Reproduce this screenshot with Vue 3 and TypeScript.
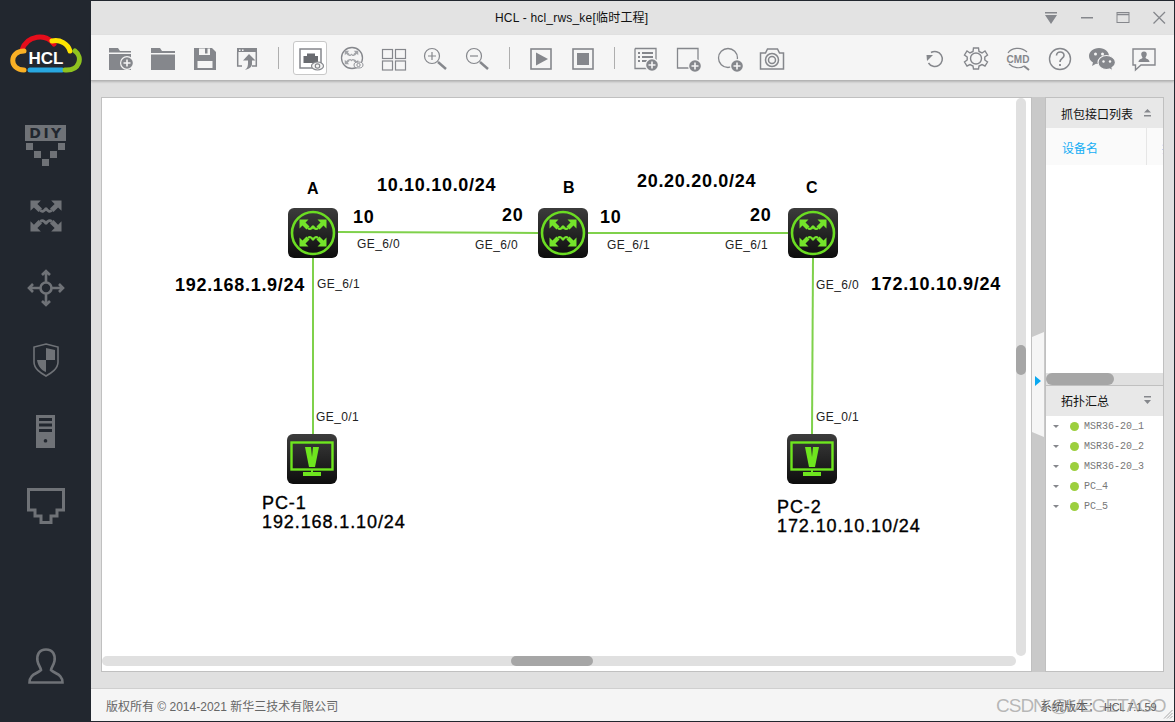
<script setup lang="ts">
interface Label { text: string; x: number; y: number; kind: 'net' | 'port' | 'name' | 'host' }
interface Node { kind: 'router' | 'pc'; x: number; y: number }

// canvas content sits at page (102, 98), numbers below are page coords
const ox = 102
const oy = 98

const nodes: Node[] = [
  { kind: 'router', x: 288, y: 208 },
  { kind: 'router', x: 538, y: 208 },
  { kind: 'router', x: 788, y: 208 },
  { kind: 'pc', x: 287, y: 434 },
  { kind: 'pc', x: 787, y: 434 }
]

const labels: Label[] = [
  { text: 'A', x: 307, y: 189, kind: 'name' },
  { text: 'B', x: 563, y: 188, kind: 'name' },
  { text: 'C', x: 806, y: 188, kind: 'name' },
  { text: '10', x: 353, y: 217, kind: 'net' },
  { text: '20', x: 502, y: 215, kind: 'net' },
  { text: '10', x: 600, y: 217, kind: 'net' },
  { text: '20', x: 750, y: 215, kind: 'net' },
  { text: '10.10.10.0/24', x: 377, y: 185, kind: 'net' },
  { text: '20.20.20.0/24', x: 637, y: 181, kind: 'net' },
  { text: '192.168.1.9/24', x: 175, y: 285, kind: 'net' },
  { text: '172.10.10.9/24', x: 871, y: 284, kind: 'net' },
  { text: 'GE_6/0', x: 357, y: 244, kind: 'port' },
  { text: 'GE_6/0', x: 475, y: 245, kind: 'port' },
  { text: 'GE_6/1', x: 607, y: 245, kind: 'port' },
  { text: 'GE_6/1', x: 725, y: 245, kind: 'port' },
  { text: 'GE_6/1', x: 317, y: 284, kind: 'port' },
  { text: 'GE_6/0', x: 816, y: 285, kind: 'port' },
  { text: 'GE_0/1', x: 316, y: 417, kind: 'port' },
  { text: 'GE_0/1', x: 816, y: 417, kind: 'port' },
  { text: 'PC-1', x: 262, y: 503, kind: 'host' },
  { text: '192.168.1.10/24', x: 262, y: 522, kind: 'host' },
  { text: 'PC-2', x: 777, y: 507, kind: 'host' },
  { text: '172.10.10.10/24', x: 777, y: 526, kind: 'host' }
]

const devices = ['MSR36-20_1', 'MSR36-20_2', 'MSR36-20_3', 'PC_4', 'PC_5']

function labelPos(l: Label) {
  return { left: l.x - ox + 'px', top: l.y - oy - 10 + 'px' }
}
function nodePos(n: Node) {
  return { left: n.x - ox + 'px', top: n.y - oy + 'px' }
}
</script>

<template>
  <div class="window">
    <!-- shared drawings -->
    <svg class="defs" width="0" height="0">
      <defs>
        <linearGradient id="tile" x1="0" y1="0" x2="0" y2="1">
          <stop offset="0" stop-color="#3c3c3c" />
          <stop offset="1" stop-color="#0d0d0d" />
        </linearGradient>
        <g id="arrows">
          <g id="quad">
            <path d="M-13.500 -13.500H-4.500L-7.500 -10.500L-3.500 -6.500L-6.500 -3.500L-10.500 -7.500L-13.500 -4.500Z" />
            <path d="M-5 -5Q-2.500 -2.500 0.300 -7" fill="none" stroke="currentColor" stroke-width="2.400" />
          </g>
          <use href="#quad" transform="scale(-1 1)" />
          <use href="#quad" transform="scale(1 -1)" />
          <use href="#quad" transform="scale(-1 -1)" />
        </g>
        <g id="eye">
          <ellipse cx="0" cy="0" rx="6" ry="4" fill="#f5f5f5" stroke="#85878c" stroke-width="1.200" />
          <circle r="2.200" fill="none" stroke="#85878c" stroke-width="1.200" />
        </g>
        <g id="plus">
          <circle r="7" fill="#f5f5f5" />
          <circle r="5.800" fill="#85878c" />
          <path d="M-3.500 0h7M0 -3.500v7" stroke="#f5f5f5" stroke-width="1.600" />
        </g>
      </defs>
    </svg>

    <aside class="sidebar">
      <svg class="logo" width="72" height="42" viewBox="0 0 72 42">
        <g fill="none" stroke-width="5" stroke-linecap="round">
          <path d="M12 17C17 2 36 0 44 11" stroke="#e60d1b" />
          <path d="M42 8C50 6 58 11 60 18" stroke="#fde400" />
          <path d="M14 18C-1 18 -1 37 14 37" stroke="#f9b025" />
          <path d="M20 37H52" stroke="#28a7e1" />
          <path d="M55 37C70 38 73 24 65 18" stroke="#8fc31f" />
        </g>
        <text x="36" y="31" text-anchor="middle" class="logo-text">HCL</text>
      </svg>

      <svg class="side-icon diy" width="42" height="42" viewBox="0 0 42 42" fill="#6f7277">
        <rect x="0" y="0" width="41" height="16" />
        <text x="21.500" y="13" text-anchor="middle" class="diy-text">DIY</text>
        <path d="M1 18h7v7H1zM33 18h7v7h-7zM9 26h7v7H9zM25 26h7v7h-7zM17 34h7v7h-7z" />
      </svg>
      <svg class="side-icon sw" width="34" height="34" viewBox="-17 -17 34 34" fill="#6f7277" color="#6f7277">
        <use href="#arrows" transform="scale(1.150)" />
      </svg>
      <svg class="side-icon hub" width="38" height="38" viewBox="-19 -19 38 38" fill="none" stroke="#6f7277" stroke-width="2.600">
        <circle r="5.500" />
        <path d="M0 -6V-17M-4 -13L0 -17L4 -13M0 6V17M-4 13L0 17L4 13M-6 0H-17M-13 -4L-17 0L-13 4M6 0H17M13 -4L17 0L13 4" />
      </svg>
      <svg class="side-icon shield" width="26" height="34" viewBox="0 0 26 34">
        <path d="M13 1L25 4V19C25 26 18 30 13 33C8 30 1 26 1 19V4Z" fill="none" stroke="#6f7277" stroke-width="1.600" />
        <path d="M13 5L22 7V17H13ZM13 17V29C8 27 5 23 4 17Z" fill="#6f7277" />
      </svg>
      <svg class="side-icon server" width="19" height="33" viewBox="0 0 19 33">
        <path fill-rule="evenodd" d="M0 0H19V33H0ZM3 3V6H16V3ZM3 8.500V11.500H16V8.500ZM3 14V17H16V14ZM9.500 24A1.800 1.800 0 1 0 9.510 24Z" fill="#6f7277" />
      </svg>
      <svg class="side-icon lan" width="38" height="37" viewBox="0 0 38 37">
        <path d="M1.500 1.500H36.500V22H30V28H24V34.500H14V28H8V22H1.500Z" fill="none" stroke="#6f7277" stroke-width="3" />
      </svg>
      <svg class="side-icon user" width="36" height="36" viewBox="0 0 36 36">
        <path d="M18 1.500C11 1.500 8.500 7 9.500 13C10.200 17 12.500 19 13 22C9 26 1.500 26 1.500 34.500H34.500C34.500 26 27 26 23 22C23.500 19 25.800 17 26.500 13C27.500 7 25 1.500 18 1.500Z" fill="none" stroke="#6f7277" stroke-width="2.600" />
      </svg>
    </aside>

    <div class="main">
      <header class="titlebar">
        <span class="title">HCL - hcl_rws_ke[临时工程]</span>
        <div class="win-btns">
          <svg width="14" height="14" viewBox="0 0 14 14" fill="#85878c"><path d="M1 1H13V2.500H1ZM1 4H13L7 13Z" /></svg>
          <svg width="14" height="14" viewBox="0 0 14 14" fill="#85878c"><rect x="1" y="6" width="12" height="1.500" /></svg>
          <svg width="14" height="14" viewBox="0 0 14 14" fill="none" stroke="#85878c"><rect x="1" y="1.500" width="12" height="10" /><path d="M1 3.500H13" stroke-width="1.500" /></svg>
          <svg width="14" height="14" viewBox="0 0 14 14" fill="none" stroke="#85878c" stroke-width="1.300"><path d="M1.500 1L13 12.500M13 1L1.500 12.500" /></svg>
        </div>
      </header>

      <nav class="toolbar">
        <div class="tool">
          <svg viewBox="0 0 32 32" fill="#85878c"><path d="M4 6H13L15 9H26V10.500H4ZM4 12H26V28H4Z" /><use href="#plus" x="22" y="21" /></svg>
        </div>
        <div class="tool">
          <svg viewBox="0 0 32 32" fill="#85878c"><path d="M4 6H13L15 9H28V11H4ZM4 12.500H28V28H4Z" /></svg>
        </div>
        <div class="tool">
          <svg viewBox="0 0 32 32"><path fill-rule="evenodd" fill="#85878c" d="M5 6H23L27 10V28H5ZM10 6.500V13H21V6.500H18.500V11.500H16V6.500ZM8.500 19V26H23.500V19Z" /></svg>
        </div>
        <div class="tool">
          <svg viewBox="0 0 32 32"><path fill="#85878c" d="M6 6H26V10H6Z" /><path fill="none" stroke="#85878c" stroke-width="1.500" d="M6.700 10V24H11M21 24H25.300V10" /><path fill="#85878c" d="M18 12L24.500 18.500H21V22C21 25 18 27 14 28C16.500 26 17 24 17 21V18.500H12Z" /><path fill="#f5f5f5" d="M8 7.500h1.500v1.500H8zM11 7.500h1.500v1.500H11z" /></svg>
        </div>
        <div class="sep"></div>
        <div class="tool active">
          <svg viewBox="0 0 32 32"><rect x="6" y="7" width="21" height="19" fill="none" stroke="#85878c" stroke-width="1.500" /><path fill="#696b70" d="M9.500 14H13V11.500H21V14H24V21H9.500Z" /><use href="#eye" x="23.500" y="24" /></svg>
        </div>
        <div class="tool">
          <svg viewBox="0 0 32 32" fill="#a2a4a8" color="#a2a4a8"><circle cx="16" cy="16" r="10.500" fill="none" stroke="#85878c" stroke-width="1.300" /><use href="#arrows" transform="translate(15.500 15.500) scale(.5)" /><use href="#eye" transform="translate(22.500 23) scale(.75)" /></svg>
        </div>
        <div class="tool">
          <svg viewBox="0 0 32 32" fill="none" stroke="#85878c" stroke-width="1.200"><rect x="4.500" y="7.500" width="10" height="9" /><rect x="17.500" y="7.500" width="10" height="9" /><rect x="4.500" y="19" width="10" height="9" /><rect x="17.500" y="19" width="10" height="9" /></svg>
        </div>
        <div class="tool">
          <svg viewBox="0 0 32 32" fill="none" stroke="#85878c"><circle cx="12" cy="14" r="7.500" stroke-width="1.200" /><path d="M8 14H16M12 10V18" stroke-width="1.200" /><path d="M18 20L26 27" stroke-width="2.400" /></svg>
        </div>
        <div class="tool">
          <svg viewBox="0 0 32 32" fill="none" stroke="#85878c"><circle cx="12" cy="14" r="7.500" stroke-width="1.200" /><path d="M8 14H16" stroke-width="1.200" /><path d="M18 20L26 27" stroke-width="2.400" /></svg>
        </div>
        <div class="sep"></div>
        <div class="tool">
          <svg viewBox="0 0 32 32"><rect x="6" y="7" width="20" height="20" fill="none" stroke="#85878c" stroke-width="1.600" /><path fill="#85878c" d="M11 10.500L23 17L11 23.500Z" /></svg>
        </div>
        <div class="tool">
          <svg viewBox="0 0 32 32"><rect x="6" y="7" width="20" height="20" fill="none" stroke="#85878c" stroke-width="1.600" /><rect x="10" y="11" width="12" height="12" fill="#85878c" /></svg>
        </div>
        <div class="sep"></div>
        <div class="tool">
          <svg viewBox="0 0 32 32"><path fill="none" stroke="#85878c" stroke-width="1.300" d="M5 6.500H26V20M5 6.500V26.500H17" /><path stroke="#85878c" stroke-width="1.800" d="M8 11H10M8 15H10M8 19H10M12 11H23M12 15H23M12 19H18" /><use href="#plus" x="22" y="23" /></svg>
        </div>
        <div class="tool">
          <svg viewBox="0 0 32 32"><path fill="none" stroke="#85878c" stroke-width="1.300" d="M17 26H5.500V6.500H26V20" /><use href="#plus" x="23" y="24" /></svg>
        </div>
        <div class="tool">
          <svg viewBox="0 0 32 32"><circle cx="14" cy="16" r="9.500" fill="none" stroke="#85878c" stroke-width="1.300" /><use href="#plus" x="23" y="24" /></svg>
        </div>
        <div class="tool">
          <svg viewBox="0 0 32 32" fill="none" stroke="#85878c"><path stroke-width="1.500" d="M4.500 11H9.500L11.500 7H21.500L23.500 11H27.500V27H4.500Z" /><circle cx="16" cy="18" r="6.500" stroke-width="1.500" /><circle cx="16" cy="18" r="3.500" stroke-width="1.500" /></svg>
        </div>

        <div class="tool-spacer"></div>

        <div class="tool">
          <svg viewBox="0 0 32 32" fill="none" stroke="#85878c" stroke-width="1.500"><path d="M13 10.500A7.500 7.500 0 1 1 10.500 21" /><path fill="#85878c" stroke="none" d="M8.500 13H15L9 19Z" /></svg>
        </div>
        <div class="tool">
          <svg viewBox="0 0 32 32" fill="none" stroke="#85878c" stroke-width="1.400"><path d="M13.500 6H18.500L19 9.500L22 11L25 9L27.500 13L24.800 15V18L27.500 20L25 24L22 22.500L19 24L18.500 27H13.500L13 24L10 22.500L7 24L4.500 20L7.200 18V15L4.500 13L7 9L10 11L13 9.500Z" /><circle cx="16" cy="16.500" r="5.500" /></svg>
        </div>
        <div class="tool">
          <svg viewBox="0 0 32 32" fill="none" stroke="#85878c" stroke-width="1.200"><path d="M6 11C9 6 19 4 25 10M7 22C11 26 18 27 22 24" /><path d="M22 24L27 28" stroke-width="2" /><text x="16" y="20.500" text-anchor="middle" class="cmd-text">CMD</text></svg>
        </div>
        <div class="tool">
          <svg viewBox="0 0 32 32" fill="none" stroke="#85878c" stroke-width="1.400"><circle cx="16" cy="17" r="10.500" /><path stroke-width="1.600" d="M12.500 13.500C12.500 8.500 20 9 20 13.500C20 16.500 16 16.500 16 20" /><path stroke-width="1.800" d="M16 22V24" /></svg>
        </div>
        <div class="tool">
          <svg viewBox="0 0 32 32"><path fill="#85878c" d="M13 6C7 6 3 10 3 14C3 17 4.500 19 7 20.500L6 24L10 21.800C11 22 12 22.100 13 22.100C19 22.100 23 18 23 14C23 10 19 6 13 6Z" /><path fill="#85878c" stroke="#f5f5f5" stroke-width="1.200" d="M20.500 13.500C15.500 13.500 12 16.800 12 20.500C12 24.200 15.500 27.500 20.500 27.500C21.500 27.500 22.500 27.300 23.500 27L27 29L26 25.800C28 24.500 29.500 22.800 29.500 20.500C29.500 16.800 25.500 13.500 20.500 13.500Z" /><circle cx="9.500" cy="12" r="1.500" fill="#f5f5f5" /><circle cx="16.500" cy="12" r="1.500" fill="#f5f5f5" /><circle cx="17.500" cy="19.500" r="1.200" fill="#f5f5f5" /><circle cx="24" cy="19.500" r="1.200" fill="#f5f5f5" /></svg>
        </div>
        <div class="tool">
          <svg viewBox="0 0 32 32"><path fill="none" stroke="#85878c" stroke-width="1.400" d="M5 7H27V23H13L7.500 28V23H5Z" /><path fill="#85878c" d="M16 9.500C13.800 9.500 13 11 13.300 13C13.500 14.200 14.500 15 14.500 16C13.500 17 10.500 17.300 10.500 20H21.500C21.500 17.300 18.500 17 17.500 16C17.500 15 18.500 14.200 18.700 13C19 11 18.200 9.500 16 9.500Z" /></svg>
        </div>
      </nav>

      <section class="workspace">
        <div class="canvas">
          <svg class="links" width="929" height="572">
            <g stroke="#7fd14b" stroke-width="2" fill="none">
              <path d="M236 134L436 135" />
              <path d="M486 135H686" />
              <path d="M211 160V336" />
              <path d="M711 160L710 336" />
            </g>
          </svg>

          <svg v-for="(n, i) in nodes" :key="i" class="node" :style="nodePos(n)" width="50" height="50" viewBox="0 0 50 50">
            <rect width="50" height="50" rx="6" fill="url(#tile)" />
            <template v-if="n.kind === 'router'">
              <circle cx="25" cy="25" r="21" fill="none" stroke="#6bdd22" stroke-width="2.600" />
              <use href="#arrows" transform="translate(25 25)" fill="#74e42a" color="#74e42a" />
            </template>
            <template v-else>
              <rect x="4.500" y="8.500" width="41" height="27" fill="none" stroke="#6ee61e" stroke-width="2.400" />
              <path d="M18 13H24L25 23L26 13H32L28 33H22Z" fill="#6ee61e" />
              <path d="M24 36H26V38H34V42H16V38H24Z" fill="#6ee61e" />
            </template>
          </svg>

          <span v-for="(l, i) in labels" :key="'l' + i" class="label" :class="l.kind" :style="labelPos(l)">{{ l.text }}</span>

          <div class="vscroll"><div class="vthumb"></div></div>
          <div class="hscroll"><div class="hthumb"></div></div>
        </div>

        <div class="splitter">
          <div class="handle"></div>
          <div class="handle-arrow"></div>
        </div>

        <div class="panel">
          <div class="panel-head">
            <span>抓包接口列表</span>
            <svg width="9" height="9" viewBox="0 0 9 9" fill="#85878c"><path d="M4.500 0L8 3.500H1ZM1 6H8V7.500H1Z" /></svg>
          </div>
          <div class="col-head">
            <span class="col-name">设备名</span>
            <span class="col-next">接</span>
          </div>
          <div class="panel-fill"></div>
          <div class="panel-scroll"><div class="panel-thumb"></div></div>

          <div class="panel-head second">
            <span>拓扑汇总</span>
            <svg width="9" height="9" viewBox="0 0 9 9" fill="#85878c"><path d="M1 0H8V1.500H1ZM1 4H8L4.500 8Z" /></svg>
          </div>
          <ul class="device-list">
            <li v-for="d in devices" :key="d">
              <i class="caret"></i>
              <i class="dot"></i>
              <span>{{ d }}</span>
            </li>
          </ul>
        </div>
      </section>

      <footer class="statusbar">
        <span>版权所有 © 2014-2021 新华三技术有限公司</span>
        <span class="version">系统版本：<span class="version-no">HCL 7.1.59</span></span>
        <span class="watermark">CSDN @VEGETAGO</span>
        <svg class="grip" width="10" height="10" viewBox="0 0 10 10" stroke="#a8a8a8"><path d="M9.500 1L1 9.500M9.500 4L4 9.500M9.500 7L7 9.500" /></svg>
      </footer>
    </div>
  </div>
</template>

<style scoped>
.window {
  display: flex;
  width: 1175px;
  height: 722px;
  box-sizing: border-box;
  border-top: 1px solid #22272f;
  border-right: 1px solid #22272f;
  border-bottom: 1px solid #22272f;
  font-family: "Liberation Sans", "Noto Sans CJK SC", sans-serif;
  overflow: hidden;
}
.defs {
  position: absolute;
}
.sidebar {
  width: 91px;
  flex: none;
  background: #22272f;
  display: flex;
  flex-direction: column;
  align-items: center;
}
.logo {
  margin-top: 32px;
}
.logo-text {
  font: bold 17px "Liberation Sans", sans-serif;
  fill: #fff;
}
.side-icon {
  display: block;
}
.diy {
  margin-top: 50px;
}
.diy-text {
  font: bold 14px "DejaVu Sans", sans-serif;
  letter-spacing: 2.500px;
  fill: #22272f;
}
.sw {
  margin-top: 32px;
}
.hub {
  margin-top: 36px;
}
.shield {
  margin-top: 36px;
}
.server {
  margin-top: 38px;
}
.lan {
  margin-top: 40px;
}
.user {
  margin-top: auto;
  margin-bottom: 37px;
}
.main {
  flex: 1;
  min-width: 0;
  display: flex;
  flex-direction: column;
}
.titlebar {
  height: 34px;
  flex: none;
  background: #e3e3e3;
  position: relative;
  display: flex;
  align-items: center;
  justify-content: flex-end;
}
.title {
  position: absolute;
  left: 404px;
  top: 9px;
  font-size: 12px;
  line-height: 16px;
  letter-spacing: 0.2px;
  color: #111;
}
.win-btns {
  display: flex;
  gap: 22px;
  margin-right: 8px;
}
.toolbar {
  height: 46px;
  flex: none;
  display: flex;
  align-items: center;
  box-sizing: border-box;
  padding: 0 9px 0 9px;
  background: #f5f5f5;
  border-bottom: 1px solid #b4b4b4;
  box-shadow: 0 1px 2px rgba(0, 0, 0, 0.2);
  position: relative;
  z-index: 1;
}
.tool {
  width: 42px;
  height: 34px;
  flex: none;
  display: flex;
  align-items: center;
  justify-content: center;
}
.tool svg {
  width: 32px;
  height: 32px;
}
.tool.active {
  box-sizing: border-box;
  width: 34px;
  margin: 0 4px;
  background: #fff;
  border: 1px solid #c8c8c8;
  border-radius: 3px;
}
.sep {
  width: 21px;
  height: 22px;
  flex: none;
  background: linear-gradient(#aeaeae, #aeaeae) center / 1px 100% no-repeat;
}
.tool-spacer {
  flex: 1;
}
.workspace {
  flex: 1;
  min-height: 0;
  display: flex;
  padding: 16px 10px 16px 10px;
  background: #e0e0e0;
}
.canvas {
  width: 931px;
  flex: none;
  box-sizing: border-box;
  position: relative;
  background: #fff;
  border: 1px solid #c0c0c0;
}
.links {
  position: absolute;
  left: 0;
  top: 0;
}
.node {
  position: absolute;
}
.label {
  position: absolute;
  line-height: 20px;
  white-space: nowrap;
  color: #000;
}
.label.net {
  font-size: 18px;
  font-weight: bold;
  letter-spacing: 0.7px;
}
.label.name {
  font-size: 16px;
  font-weight: bold;
}
.label.port {
  font-size: 12px;
  letter-spacing: 0.4px;
  color: #222;
}
.label.host {
  font-size: 18px;
  letter-spacing: 0.9px;
  -webkit-text-stroke: 0.35px #000;
}
.vscroll {
  position: absolute;
  left: 914px;
  top: 0;
  width: 10px;
  height: 558px;
  border-radius: 5px;
  background: #e0e0e0;
}
.vthumb {
  position: relative;
  top: 247px;
  height: 30px;
  border-radius: 5px;
  background: #a6a6a6;
}
.hscroll {
  position: absolute;
  left: 0;
  top: 558px;
  width: 914px;
  height: 10px;
  border-radius: 5px;
  background: #e0e0e0;
}
.hthumb {
  position: relative;
  left: 409px;
  width: 82px;
  height: 10px;
  border-radius: 5px;
  background: #a6a6a6;
}
.splitter {
  width: 13px;
  flex: none;
  background: #c9c9c9;
  position: relative;
}
.handle {
  position: absolute;
  left: 0;
  top: 235px;
  width: 12px;
  height: 105px;
  background: #f5f5f5;
  clip-path: polygon(0 5px, 100% 0, 100% 100%, 0 100px);
}
.handle-arrow {
  position: absolute;
  left: 3px;
  top: 279px;
  border-left: 6px solid #09a8f0;
  border-top: 5.5px solid transparent;
  border-bottom: 5.5px solid transparent;
}
.panel {
  flex: 1;
  min-width: 0;
  display: flex;
  flex-direction: column;
  background: #fff;
  border: 1px solid #c0c0c0;
  overflow: hidden;
}
.panel-head {
  height: 30px;
  flex: none;
  display: flex;
  align-items: center;
  justify-content: space-between;
  padding: 0 11px 0 15px;
  background: #e8e8e8;
  font-size: 12px;
  color: #111;
}
.panel-head.second {
  border-top: 1px solid #c0c0c0;
  padding-bottom: 1px;
  box-sizing: content-box;
  height: 29px;
}
.col-head {
  height: 37px;
  flex: none;
  display: flex;
  align-items: center;
  background: #fafafa;
  font-size: 12px;
  color: #14aef5;
  overflow: hidden;
}
.col-name {
  width: 101px;
  flex: none;
  box-sizing: border-box;
  height: 37px;
  line-height: 42px;
  padding-left: 16px;
  border-right: 1px solid #e6e6e6;
}
.col-next {
  margin-left: 15px;
  line-height: 42px;
  height: 37px;
  flex: none;
}
.panel-fill {
  flex: 1;
  min-height: 0;
}
.panel-scroll {
  height: 12px;
  flex: none;
  background: #e0e0e0;
}
.panel-thumb {
  width: 68px;
  height: 12px;
  border-radius: 6px;
  background: #a6a6a6;
}
.device-list {
  height: 255px;
  flex: none;
  margin: 0;
  padding: 0;
  list-style: none;
}
.device-list li {
  height: 20px;
  display: flex;
  align-items: center;
  font: 10px "Liberation Mono", monospace;
  color: #777;
}
.caret {
  margin-left: 7px;
  border-top: 3px solid #85878c;
  border-left: 3px solid transparent;
  border-right: 3px solid transparent;
}
.dot {
  width: 9px;
  height: 9px;
  margin: 0 5px 0 11px;
  border-radius: 50%;
  background: #9ccf3e;
}
.statusbar {
  height: 33px;
  flex: none;
  box-sizing: border-box;
  position: relative;
  display: flex;
  align-items: center;
  padding-left: 15px;
  background: #f5f5f5;
  border-top: 1px solid #cfcfcf;
  font-size: 12px;
  color: #666;
}
.version {
  position: absolute;
  left: 949px;
  top: 8px;
  color: #555;
  white-space: nowrap;
}
.version-no {
  margin-left: 4px;
  font-size: 11px;
  letter-spacing: -0.3px;
}
.watermark {
  position: absolute;
  left: 905px;
  top: 6px;
  font-size: 19px;
  line-height: 22px;
  letter-spacing: -1px;
  color: rgba(130, 130, 130, 0.55);
  white-space: nowrap;
}
.grip {
  position: absolute;
  right: 1px;
  bottom: 2px;
}
.cmd-text {
  font: bold 10px "Liberation Sans", sans-serif;
  fill: #85878c;
  stroke: none;
}
</style>

<style>
html,
body {
  margin: 0;
  overflow: hidden;
}
</style>
